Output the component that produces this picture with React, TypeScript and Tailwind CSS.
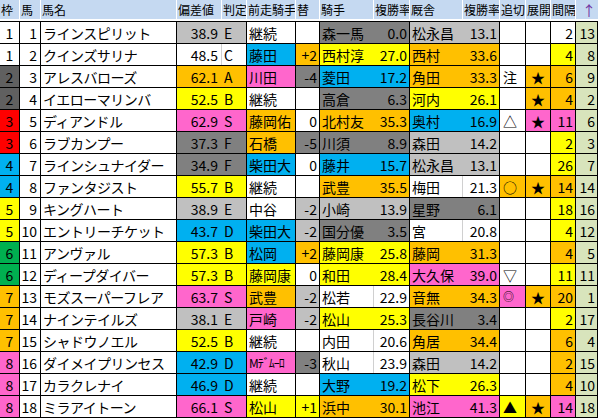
import React from 'react';

type Fill = 'W' | 'L' | 'D' | 'O' | 'Y' | 'P' | 'B';

const fill: Record<Fill, string> = {
  W: 'bg-white',
  L: 'bg-[#c0c0c0]',
  D: 'bg-[#808080]',
  O: 'bg-[#ffc000]',
  Y: 'bg-[#ffff00]',
  P: 'bg-[#ff66cc]',
  B: 'bg-[#00b0f0]',
};

const waku: Record<number, string> = {
  1: 'bg-white',
  2: 'bg-[#606060]',
  3: 'bg-[#ff0000]',
  4: 'bg-[#00b0f0]',
  5: 'bg-[#ffff00]',
  6: 'bg-[#00b050]',
  7: 'bg-[#ffc000]',
  8: 'bg-[#ff66cc]',
};

type Row = {
  w: number;
  no: number;
  name: string;
  dev: string;
  grade: string;
  gf: Fill;
  prev: string;
  pf: Fill;
  chg: string;
  cf: Fill;
  jockey: string;
  jr: string;
  jf: Fill;
  stable: string;
  sr: string;
  sf: Fill;
  oikiri: string;
  of: Fill;
  tenkai: string;
  tf: Fill;
  gap: string;
  af: Fill;
  up: string;
};

const r = (
  w: number, no: number, name: string, dev: string, grade: string, gf: Fill,
  prev: string, pf: Fill, chg: string, cf: Fill,
  jockey: string, jr: string, jf: Fill,
  stable: string, sr: string, sf: Fill,
  oikiri: string, of: Fill, tenkai: string, tf: Fill,
  gap: string, af: Fill, up: string,
): Row => ({ w, no, name, dev, grade, gf, prev, pf, chg, cf, jockey, jr, jf, stable, sr, sf, oikiri, of, tenkai, tf, gap, af, up });

const rows: Row[] = [
  r(1, 1, 'ラインスピリット', '38.9', 'E', 'L', '継続', 'W', '', 'W', '森一馬', '0.0', 'D', '松永昌', '13.1', 'L', '', 'W', '', 'W', '2', 'W', '13'),
  r(1, 2, 'クインズサリナ', '48.5', 'C', 'W', '藤田', 'B', '+2', 'O', '西村淳', '27.0', 'Y', '西村', '33.6', 'O', '', 'W', '', 'W', '4', 'Y', '8'),
  r(2, 3, 'アレスバローズ', '62.1', 'A', 'O', '川田', 'P', '-4', 'D', '菱田', '17.2', 'B', '角田', '33.3', 'O', '注', 'W', '★', 'O', '6', 'O', '9'),
  r(2, 4, 'イエローマリンバ', '52.5', 'B', 'Y', '継続', 'W', '', 'W', '高倉', '6.3', 'D', '河内', '26.1', 'Y', '', 'W', '★', 'O', '4', 'O', '2'),
  r(3, 5, 'ディアンドル', '62.9', 'S', 'P', '藤岡佑', 'O', '0', 'W', '北村友', '35.3', 'O', '奥村', '16.9', 'B', '△', 'W', '★', 'P', '11', 'P', '6'),
  r(3, 6, 'ラブカンプー', '37.3', 'F', 'D', '石橋', 'O', '-5', 'D', '川須', '8.9', 'D', '森田', '14.2', 'L', '', 'W', '', 'W', '2', 'Y', '3'),
  r(4, 7, 'ラインシュナイダー', '34.9', 'F', 'D', '柴田大', 'B', '0', 'W', '藤井', '15.7', 'B', '松永昌', '13.1', 'L', '', 'W', '', 'W', '26', 'Y', '7'),
  r(4, 8, 'ファンタジスト', '55.7', 'B', 'Y', '継続', 'W', '', 'W', '武豊', '35.5', 'O', '梅田', '21.3', 'W', '○', 'O', '★', 'O', '14', 'O', '14'),
  r(5, 9, 'キングハート', '38.9', 'E', 'L', '中谷', 'W', '-2', 'L', '小崎', '13.9', 'L', '星野', '6.1', 'D', '', 'W', '', 'W', '18', 'Y', '16'),
  r(5, 10, 'エントリーチケット', '43.7', 'D', 'B', '柴田大', 'B', '-2', 'L', '国分優', '3.5', 'D', '宮', '20.8', 'W', '', 'W', '', 'W', '4', 'Y', '12'),
  r(6, 11, 'アンヴァル', '57.3', 'B', 'Y', '松岡', 'B', '+2', 'O', '藤岡康', '25.8', 'Y', '藤岡', '31.3', 'O', '', 'W', '', 'W', '4', 'O', '5'),
  r(6, 12, 'ディープダイバー', '57.3', 'B', 'Y', '藤岡康', 'Y', '0', 'W', '和田', '28.4', 'Y', '大久保', '39.0', 'P', '▽', 'W', '', 'W', '11', 'Y', '11'),
  r(7, 13, 'モズスーパーフレア', '63.7', 'S', 'P', '武豊', 'O', '-2', 'L', '松若', '22.9', 'W', '音無', '34.3', 'O', '◎', 'P', '★', 'O', '20', 'O', '1'),
  r(7, 14, 'ナインテイルズ', '38.1', 'E', 'L', '戸崎', 'P', '-2', 'L', '松山', '25.3', 'Y', '長谷川', '3.4', 'D', '', 'W', '', 'W', '2', 'Y', '17'),
  r(7, 15, 'シャドウノエル', '52.5', 'B', 'Y', '継続', 'W', '', 'W', '内田', '20.6', 'W', '角居', '34.4', 'O', '', 'W', '', 'W', '6', 'O', '4'),
  r(8, 16, 'ダイメイプリンセス', '42.9', 'D', 'B', 'Mﾃﾞﾑｰﾛ', 'P', '-3', 'D', '秋山', '23.9', 'W', '森田', '14.2', 'L', '', 'W', '', 'W', '2', 'O', '15'),
  r(8, 17, 'カラクレナイ', '46.9', 'D', 'B', '継続', 'W', '', 'W', '大野', '19.2', 'B', '松下', '26.3', 'Y', '', 'W', '', 'W', '4', 'O', '10'),
  r(8, 18, 'ミラアイトーン', '66.1', 'S', 'P', '松山', 'Y', '+1', 'Y', '浜中', '30.1', 'O', '池江', '41.3', 'P', '▲', 'Y', '★', 'O', '14', 'P', '18'),
];

const cols =
  'grid grid-cols-[20px_21px_136px_45px_25px_49px_24px_54px_36px_53px_37px_26px_25px_25px_22px]';

const headers = ['枠', '馬', '馬名', '偏差値', '判定', '前走騎手', '替', '騎手', '複勝率', '厩舎', '複勝率', '追切', '展開', '間隔'];

// inner line of a merged-looking pair: gridline only when unfilled
const inner = (f: Fill) => (f === 'W' ? 'border-r border-[#d0d0d0]' : 'border-r border-transparent');

function Cell({ className, children }: { className: string; children?: React.ReactNode }) {
  return <div className={`h-[21px] flex items-center overflow-hidden whitespace-nowrap ${className}`}>{children}</div>;
}

export default function App() {
  return (
    <div
      className="w-[601px] h-[420px] bg-white overflow-hidden text-black"
      style={{ fontFamily: '"Noto Sans CJK JP", "Noto Sans", sans-serif' }}
    >
      <div className="w-[598px]">
        <div className={`${cols} pb-[2px]`}>
          {headers.map((h, i) => (
            <div
              key={i}
              className="h-[19px] bg-[#c5d9f1] border-r border-white flex items-center pl-[1px] text-[12px] leading-none overflow-hidden whitespace-nowrap"
            >
              {h}
            </div>
          ))}
          <div className="h-[19px] bg-[#c5d9f1] flex items-center pl-[6px] text-[14px] leading-none text-[#7030a0]">↑</div>
        </div>

        <div className="border-t border-black text-[14px] leading-none">
          {rows.map((x) => (
            <div key={x.no} className={`${cols} border-b border-black`}>
              <Cell className={`${waku[x.w]} border-r border-black justify-center`}>{x.w}</Cell>
              <Cell className="bg-white border-r border-black justify-end pr-[3px]">{x.no}</Cell>
              <Cell className="bg-white border-r border-black pl-[2px] tracking-[-0.5px]">{x.name}</Cell>
              <Cell className={`${fill[x.gf]} ${inner(x.gf)} justify-end pr-[3px]`}>{x.dev}</Cell>
              <Cell className={`${fill[x.gf]} border-r border-black pl-[2px]`}>{x.grade}</Cell>
              <Cell className={`${fill[x.pf]} border-r border-black pl-[2px] ${x.prev.startsWith('M') ? 'text-[12px] tracking-[-1px]' : ''}`}>
                {x.prev}
              </Cell>
              <Cell className={`${fill[x.cf]} border-r border-black justify-end pr-[2px]`}>{x.chg}</Cell>
              <Cell className={`${fill[x.jf]} ${inner(x.jf)} pl-[2px]`}>{x.jockey}</Cell>
              <Cell className={`${fill[x.jf]} border-r border-black justify-end pr-[2px]`}>{x.jr}</Cell>
              <Cell className={`${fill[x.sf]} ${inner(x.sf)} pl-[2px]`}>{x.stable}</Cell>
              <Cell className={`${fill[x.sf]} border-r border-black justify-end pr-[2px]`}>{x.sr}</Cell>
              <Cell className={`${fill[x.of]} border-r border-black pl-[3px] ${x.oikiri === '◎' ? 'text-[11px]' : ''}`}>
                {x.oikiri}
              </Cell>
              <Cell className={`${fill[x.tf]} border-r border-black justify-center`}>{x.tenkai}</Cell>
              <Cell className={`${fill[x.af]} border-r border-black justify-end pr-[2px]`}>{x.gap}</Cell>
              <Cell className="bg-[#d8e4bc] border-r border-black justify-end pr-[2px]">{x.up}</Cell>
            </div>
          ))}
        </div>
      </div>
    </div>
  );
}
